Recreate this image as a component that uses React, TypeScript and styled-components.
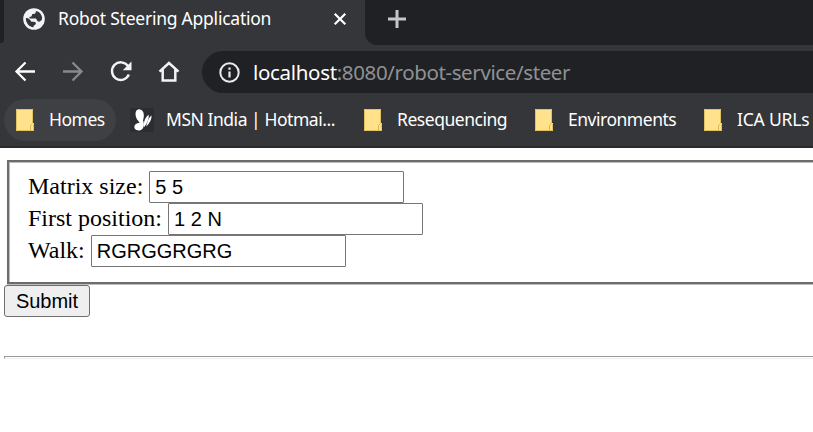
import React from "react";
import styled, { createGlobalStyle } from "styled-components";

const GlobalStyle = createGlobalStyle`
  * { box-sizing: border-box; }
  html, body { margin: 0; padding: 0; background: #fff; overflow: hidden; }
`;

const Browser = styled.div`
  width: 813px;
  height: 432px;
  overflow: hidden;
  background: #fff;
  font-family: "Noto Sans", "Open Sans", sans-serif;
`;

const Chrome = styled.header`
  height: 148px;
  background: #35363a;
  border-bottom: 2px solid #29292b;
  white-space: nowrap;
`;

const TabStrip = styled.div`
  display: flex;
  height: 45px;
  background: #35363a;
`;

const StripEdge = styled.div`
  flex: none;
  width: 4px;
  height: 43px;
  background: #202124;
  border-bottom-right-radius: 8px;
`;

const Tab = styled.div`
  flex: none;
  display: flex;
  align-items: center;
  width: 361px;
  height: 38px;
  padding-left: 19px;
`;

const TabTitle = styled.span`
  width: 276px;
  margin-left: 13px;
  padding-bottom: 2px;
  color: #fff;
  font-size: 17.5px;
  line-height: 24px;
  letter-spacing: -0.24px;
`;

const StripRest = styled.div`
  flex: 1;
  padding: 9px 0 0 22px;
  background: #202124;
  border-bottom-left-radius: 12px;
`;

const Icon = styled.svg`
  display: block;
  flex: none;
  overflow: visible;
`;

const Toolbar = styled.div`
  display: flex;
  align-items: center;
  height: 54px;
  padding-left: 13px;
`;

const NavButton = styled.div`
  flex: none;
  width: 48px;
`;

const AddressBar = styled.div`
  display: flex;
  flex: 1;
  align-items: center;
  height: 42px;
  margin-left: -3px;
  padding-left: 17px;
  background: #202124;
  border-radius: 21px 0 0 21px;
`;

const Url = styled.span`
  margin-left: 13px;
  color: #8f9195;
  font-size: 20.5px;
  line-height: 28px;
  letter-spacing: -0.38px;
`;

const Host = styled.span`
  color: #fff;
  letter-spacing: -0.32px;
`;

const Bookmarks = styled.nav`
  display: flex;
  height: 42px;
  padding-left: 4px;
`;

const Bookmark = styled.div<{ $width: number; $active?: boolean; $inset?: number }>`
  display: flex;
  flex: none;
  align-items: center;
  width: ${(p) => p.$width}px;
  height: 42px;
  padding-left: ${(p) => p.$inset ?? 12}px;
  border-radius: 21px;
  background: ${(p) => (p.$active ? "#3f4043" : "transparent")};
`;

const BookmarkLabel = styled.span<{ $spacing: number; $gap?: number }>`
  margin-left: ${(p) => p.$gap ?? 15}px;
  padding-bottom: 2px;
  color: #fff;
  font-size: 17.5px;
  line-height: 24px;
  letter-spacing: ${(p) => p.$spacing}px;
`;

const Page = styled.main`
  padding: 12px 0 0 4px;
  color: #000;
  font-family: "Liberation Serif", "Times New Roman", serif;
`;

const FieldGroup = styled.div`
  height: 124px;
  margin-left: 3px;
  padding: 9px 0 0 19px;
  border: solid #6c6c6c;
  border-width: 2px 0 2px 2px;
  box-shadow: inset 1px 1px 0 #bcbcbc, 0 1px 0 #bcbcbc;
`;

const FieldRow = styled.label`
  display: flex;
  height: 32px;
  font-size: 24px;
  line-height: 31px;
`;

const TextInput = styled.input`
  width: 255px;
  height: 32px;
  margin: 0 0 0 6px;
  padding: 0 5px;
  border: 1px solid #767676;
  border-radius: 1px;
  background: #fff;
  color: #000;
  font: 20px "Liberation Sans", Arial, sans-serif;
  outline: none;
`;

const SubmitButton = styled.button`
  display: block;
  width: 86px;
  height: 32px;
  margin: 1px 0 0;
  padding: 0;
  border: 1px solid #6f6f6f;
  border-radius: 3px;
  background: #efefef;
  color: #000;
  font: 20px "Liberation Sans", Arial, sans-serif;
`;

const Divider = styled.hr`
  height: 3px;
  margin: 39px 0 0;
  border: solid #999;
  border-width: 1px 0 1px 1px;
  border-bottom-color: #eee;
`;

function FolderIcon() {
  return (
    <Icon width="18" height="22" viewBox="0 0 18 22">
      <path d="M0 0H17V14H18V22H0Z" fill="#ffe28b" />
      <path d="M.5 21.500V.5H16.500V14M.5 21.500H17.500V15" fill="none" stroke="#e3c25c" />
      <path d="M14.500 21V16.500l2-2" fill="none" stroke="#dcb546" />
    </Icon>
  );
}

function ButterflyIcon() {
  return (
    <Icon width="24" height="24" viewBox="0 0 24 24">
      <path d="M0 0H24V24H0Z" fill="#2c2d30" />
      <path
        d="M8.500 13C5 10 4 1.500 9 1.200c4.500 0 6 5 4 11.300 2 4 .5 10-4 10-4.500 0-5.500-3.500-4-5.500 1-1.500 2.500-2 4.500-2Z"
        fill="#fff"
      />
      <path d="M13.800 19.500C13.300 14 15.500 9 18.500 6.800c1.200 3.200-1.700 9.200-4.700 12.700Z" fill="#fff" />
      <path d="M16.300 18.500C17 14 19 9 21.500 7.500c.4 3.500-2 8-5.200 11Z" fill="#fff" />
    </Icon>
  );
}

function GlobeIcon() {
  return (
    <Icon width="22" height="22" viewBox="0 0 22 22">
      <circle cx="11" cy="11" r="10.800" fill="#f1f3f4" />
      <path
        d="M13.500 3C12.500 3.500 13 5.500 11 6H9.500C8.500 6.500 9.500 8 8 8.800H6.500V10.500H12C14 10.500 13.500 12.500 15 13.500C16.500 14 18 13 19 11.500A8.300 8.300 0 0 0 13.500 3Z"
        fill="#35363a"
      />
      <path
        d="M2.900 10C2.500 14.500 6 19 10.500 19.200C10.300 17.500 11.500 17.500 12.500 16.500C13.500 15 12.500 13.800 10.500 13.800H8.500C7.500 12.500 6.500 10 2.900 10Z"
        fill="#35363a"
      />
    </Icon>
  );
}

export default function App() {
  return (
    <Browser>
      <GlobalStyle />
      <Chrome>
        <TabStrip>
          <StripEdge />
          <Tab>
            <GlobeIcon />
            <TabTitle>Robot Steering Application</TabTitle>
            <Icon width="12" height="12" viewBox="0 0 12 12">
              <path d="M.7.7 11.300 11.300M11.300.7.7 11.300" stroke="#fff" strokeWidth="2.200" />
            </Icon>
          </Tab>
          <StripRest>
            <Icon width="20" height="20" viewBox="0 0 20 20">
              <path d="M10 1v18M1 10h18" stroke="#c5c6c9" strokeWidth="3" />
            </Icon>
          </StripRest>
        </TabStrip>
        <Toolbar>
          <NavButton>
            <Icon width="24" height="24" viewBox="0 0 24 24">
              <path d="M22 11.500H3.500M12.500 2.500l-9 9 9 9" fill="none" stroke="#fff" strokeWidth="2.300" />
            </Icon>
          </NavButton>
          <NavButton>
            <Icon width="24" height="24" viewBox="0 0 24 24">
              <path d="M2 11.500h18.500M11.500 2.500l9 9-9 9" fill="none" stroke="#88898c" strokeWidth="2.300" />
            </Icon>
          </NavButton>
          <NavButton>
            <Icon width="24" height="24" viewBox="0 0 24 24">
              <path d="M19 6A8.800 8.800 0 1 0 19.900 14.600" fill="none" stroke="#f1f3f4" strokeWidth="2.400" />
              <path d="M22.500 1.500v8.700h-8.700Z" fill="#f1f3f4" />
            </Icon>
          </NavButton>
          <NavButton>
            <Icon width="24" height="24" viewBox="0 0 24 24">
              <path
                d="M2.500 11.700 12 3l9.500 8.700M5.700 9.500V20.500H18.300V9.500"
                fill="none"
                stroke="#f1f3f4"
                strokeWidth="2.500"
              />
            </Icon>
          </NavButton>
          <AddressBar>
            <Icon width="21" height="21" viewBox="0 0 21 21">
              <circle cx="10.500" cy="10.500" r="9.200" fill="none" stroke="#e8eaed" strokeWidth="2" />
              <path d="M10.500 9.500v6M10.500 5.500v2.200" stroke="#e8eaed" strokeWidth="2.200" />
            </Icon>
            <Url>
              <Host>localhost</Host>:8080/robot-service/steer
            </Url>
          </AddressBar>
        </Toolbar>
        <Bookmarks>
          <Bookmark $width={112} $active>
            <FolderIcon />
            <BookmarkLabel $spacing={-0.5}>Homes</BookmarkLabel>
          </Bookmark>
          <Bookmark $width={236} $inset={14}>
            <ButterflyIcon />
            <BookmarkLabel $spacing={-0.46} $gap={12}>MSN India | Hotmai...</BookmarkLabel>
          </Bookmark>
          <Bookmark $width={171}>
            <FolderIcon />
            <BookmarkLabel $spacing={-0.47}>Resequencing</BookmarkLabel>
          </Bookmark>
          <Bookmark $width={170}>
            <FolderIcon />
            <BookmarkLabel $spacing={-0.48}>Environments</BookmarkLabel>
          </Bookmark>
          <Bookmark $width={140} $inset={11}>
            <FolderIcon />
            <BookmarkLabel $spacing={-0.2}>ICA URLs</BookmarkLabel>
          </Bookmark>
        </Bookmarks>
      </Chrome>
      <Page>
        <FieldGroup>
          <FieldRow>
            Matrix size:
            <TextInput defaultValue="5 5" />
          </FieldRow>
          <FieldRow>
            First position:
            <TextInput defaultValue="1 2 N" />
          </FieldRow>
          <FieldRow>
            Walk:
            <TextInput defaultValue="RGRGGRGRG" />
          </FieldRow>
        </FieldGroup>
        <SubmitButton>Submit</SubmitButton>
        <Divider />
      </Page>
    </Browser>
  );
}
